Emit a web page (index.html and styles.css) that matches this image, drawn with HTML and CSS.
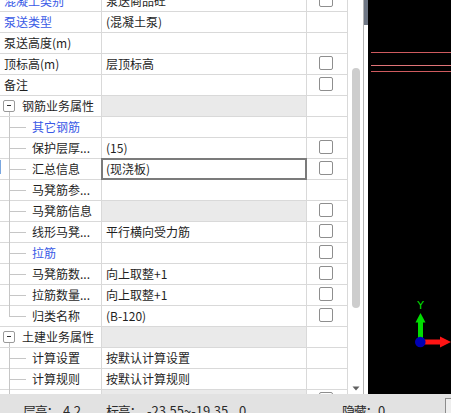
FILE: index.html
```html
<!DOCTYPE html>
<html lang="zh-CN">
<head>
<meta charset="utf-8">
<title>属性编辑</title>
<link rel="stylesheet" href="styles.css">
</head>
<body>
<div class="app">
  <div class="main">
    <div class="panel">
      <div class="grid">
        <div class="row">
          <div class="cell name blue">混凝土类别</div>
          <div class="cell val">泵送商品砼</div>
          <div class="cell chk"><span class="cb"></span></div>
        </div>
        <div class="row">
          <div class="cell name blue">泵送类型</div>
          <div class="cell val">(混凝土泵)</div>
          <div class="cell chk"></div>
        </div>
        <div class="row">
          <div class="cell name">泵送高度(m)</div>
          <div class="cell val"></div>
          <div class="cell chk"></div>
        </div>
        <div class="row">
          <div class="cell name">顶标高(m)</div>
          <div class="cell val">层顶标高</div>
          <div class="cell chk"><span class="cb"></span></div>
        </div>
        <div class="row">
          <div class="cell name">备注</div>
          <div class="cell val"></div>
          <div class="cell chk"><span class="cb"></span></div>
        </div>
        <div class="row grp">
          <div class="cell name"><span class="exp"></span>钢筋业务属性</div>
          <div class="cell val gray"></div>
          <div class="cell chk"></div>
        </div>
        <div class="row">
          <div class="cell name child"><span class="tree"></span><span class="blue">其它钢筋</span></div>
          <div class="cell val"></div>
          <div class="cell chk"></div>
        </div>
        <div class="row">
          <div class="cell name child"><span class="tree"></span>保护层厚...</div>
          <div class="cell val">(15)</div>
          <div class="cell chk"><span class="cb"></span></div>
        </div>
        <div class="row">
          <div class="cell name child current"><span class="tree"></span>汇总信息</div>
          <div class="cell val sel">(现浇板)</div>
          <div class="cell chk"><span class="cb"></span></div>
        </div>
        <div class="row">
          <div class="cell name child"><span class="tree"></span>马凳筋参...</div>
          <div class="cell val"></div>
          <div class="cell chk"></div>
        </div>
        <div class="row">
          <div class="cell name child"><span class="tree"></span>马凳筋信息</div>
          <div class="cell val gray"></div>
          <div class="cell chk"><span class="cb"></span></div>
        </div>
        <div class="row">
          <div class="cell name child"><span class="tree"></span>线形马凳...</div>
          <div class="cell val">平行横向受力筋</div>
          <div class="cell chk"><span class="cb"></span></div>
        </div>
        <div class="row">
          <div class="cell name child"><span class="tree"></span><span class="blue">拉筋</span></div>
          <div class="cell val"></div>
          <div class="cell chk"><span class="cb"></span></div>
        </div>
        <div class="row">
          <div class="cell name child"><span class="tree"></span>马凳筋数...</div>
          <div class="cell val">向上取整+1</div>
          <div class="cell chk"><span class="cb"></span></div>
        </div>
        <div class="row">
          <div class="cell name child"><span class="tree"></span>拉筋数量...</div>
          <div class="cell val">向上取整+1</div>
          <div class="cell chk"><span class="cb"></span></div>
        </div>
        <div class="row">
          <div class="cell name child"><span class="tree last"></span>归类名称</div>
          <div class="cell val">(B-120)</div>
          <div class="cell chk"><span class="cb"></span></div>
        </div>
        <div class="row grp">
          <div class="cell name"><span class="exp"></span>土建业务属性</div>
          <div class="cell val gray"></div>
          <div class="cell chk"></div>
        </div>
        <div class="row">
          <div class="cell name child"><span class="tree"></span>计算设置</div>
          <div class="cell val">按默认计算设置</div>
          <div class="cell chk"></div>
        </div>
        <div class="row">
          <div class="cell name child"><span class="tree"></span>计算规则</div>
          <div class="cell val">按默认计算规则</div>
          <div class="cell chk"></div>
        </div>
        <div class="row">
          <div class="cell name child"><span class="tree"></span></div>
          <div class="cell val gray"></div>
          <div class="cell chk"><span class="cb"></span></div>
        </div>
      </div>
      <div class="vscroll">
        <div class="thumb"></div>
        <svg class="arrow" width="8" height="5" viewBox="0 0 8 5"><polygon points="0.5,0.5 7.5,0.5 4,4.5" fill="#606060"/></svg>
      </div>
    </div>
    <div class="splitter"><div class="grip"></div></div>
    <div class="canvas">
      <svg width="83" height="394" viewBox="0 0 83 394">
        <line x1="3" y1="52.5" x2="83" y2="52.5" stroke="#cf5a5e" stroke-width="1"/>
        <line x1="3" y1="65.5" x2="83" y2="65.5" stroke="#e07478" stroke-width="1"/>
        <line x1="3" y1="71.5" x2="83" y2="71.5" stroke="#cf5a5e" stroke-width="1"/>
        <text x="52.5" y="308.5" fill="#00e000" font-size="11" text-anchor="middle" font-family="DejaVu Sans, sans-serif">Y</text>
        <polygon points="52.5,313 47.5,322.5 57.5,322.5" fill="#00dc00"/>
        <rect x="50" y="322" width="5" height="17" fill="#00dc00"/>
        <rect x="56" y="339.5" width="16" height="5" fill="#ff1414"/>
        <polygon points="72,336.5 83,342 72,347.5" fill="#ff1414"/>
        <circle cx="52.3" cy="342" r="5.3" fill="#0000b4"/>
      </svg>
    </div>
  </div>
  <div class="status">
    <span></span>
    <span class="st lbl">层高：</span>
    <span class="st">4.2</span>
    <span class="st lbl">标高：</span>
    <span class="st">-23.55~-19.35</span>
    <span class="st">0</span>
    <span class="st lbl">隐藏：</span>
    <span class="st">0</span>
    <span class="sbox"></span>
  </div>
</div>
</body>
</html>
```

FILE: styles.css
```css
* {
  box-sizing: border-box;
  margin: 0;
  padding: 0;
}

html,
body {
  width: 451px;
  height: 413px;
  overflow: hidden;
  background: #ffffff;
}

body {
  font-family: "Noto Sans CJK SC", "Microsoft YaHei", sans-serif;
  font-size: 12px;
  color: #1f1f1f;
}

.app {
  display: flex;
  flex-direction: column;
  height: 413px;
}

.main {
  display: flex;
  height: 394px;
  overflow: hidden;
}

.panel {
  display: flex;
  width: 363px;
  flex: none;
  background: #ffffff;
}

.grid {
  width: 348px;
  flex: none;
  margin-top: -9px;
  display: flex;
  flex-direction: column;
}

.row {
  display: grid;
  grid-template-columns: 102px 205px 41px;
  height: 21px;
  flex: none;
}

.cell {
  border-right: 1px solid #d9d9d9;
  border-bottom: 1px solid #d9d9d9;
  line-height: 20px;
  white-space: nowrap;
  display: flex;
  align-items: center;
}

.name {
  padding-left: 4px;
}

.val {
  padding-left: 4px;
}

.gray {
  background: #eaeaea;
}

.blue {
  color: #3a5ae6;
}

.chk {
  align-items: flex-start;
  padding-left: 12px;
  padding-top: 2px;
}

.cb {
  width: 14px;
  height: 14px;
  border: 1px solid #8e8e8e;
  border-radius: 2px;
  background: #ffffff;
}

.grp .name {
  padding-left: 3px;
  background: linear-gradient(#c6c6c6, #c6c6c6) no-repeat 9px 16px / 1px 4px;
}

.exp {
  position: relative;
  width: 12px;
  height: 12px;
  margin-right: 7px;
  border: 1px solid #9a9a9a;
  border-radius: 2px;
  background: #ffffff;
  flex: none;
}

.exp::after {
  content: "";
  position: absolute;
  left: 3px;
  top: 4px;
  width: 4px;
  height: 1px;
  background: #333333;
}

.child {
  padding-left: 9px;
  align-items: stretch;
}

.tree {
  width: 17px;
  margin-right: 6px;
  margin-bottom: -1px;
  flex: none;
  background:
    linear-gradient(#c6c6c6, #c6c6c6) no-repeat 0 0 / 1px 100%,
    linear-gradient(#c6c6c6, #c6c6c6) no-repeat 1px 10px / 16px 1px;
}

.tree.last {
  background:
    linear-gradient(#c6c6c6, #c6c6c6) no-repeat 0 0 / 1px 11px,
    linear-gradient(#c6c6c6, #c6c6c6) no-repeat 1px 10px / 16px 1px;
}

.current {
  position: relative;
}

.current::before {
  content: "";
  position: absolute;
  left: 0;
  top: 1px;
  width: 1px;
  height: 14px;
  background: #7aa7e0;
}

.sel {
  position: relative;
}

.sel::after {
  content: "";
  position: absolute;
  left: -1px;
  top: -1px;
  right: -1px;
  bottom: -1px;
  border: 2px solid #7b7b7b;
}

.vscroll {
  width: 15px;
  flex: none;
  display: flex;
  flex-direction: column;
  align-items: flex-start;
  padding-left: 4px;
}

.thumb {
  width: 8px;
  height: 240px;
  margin-top: 68px;
  border-radius: 4px;
  background: #cdcdcd;
}

.arrow {
  display: block;
  margin-top: auto;
  margin-bottom: 3px;
}

.splitter {
  width: 5px;
  flex: none;
  border-left: 1px solid #b4b4b4;
  background: #ffffff;
}

.grip {
  height: 25px;
  background: #6f7785;
}

.canvas {
  flex: 1;
  background: #000000;
}

.canvas svg {
  display: block;
}

.status {
  height: 19px;
  flex: none;
  background: #e2e2e2;
  display: grid;
  grid-template-columns: 23px 40px 43px 41px 92px 103px 36px 67px 6px;
  align-items: start;
  overflow: hidden;
  font-size: 13px;
  line-height: 18px;
  color: #2a2a2a;
}

.st {
  padding-top: 8px;
  white-space: nowrap;
  overflow: hidden;
}

.lbl {
  letter-spacing: -1.2px;
}

.sbox {
  height: 20px;
  margin-top: 4px;
  border: 1px solid #8c8c8c;
  border-right: none;
  background: #eeeeee;
}
```
